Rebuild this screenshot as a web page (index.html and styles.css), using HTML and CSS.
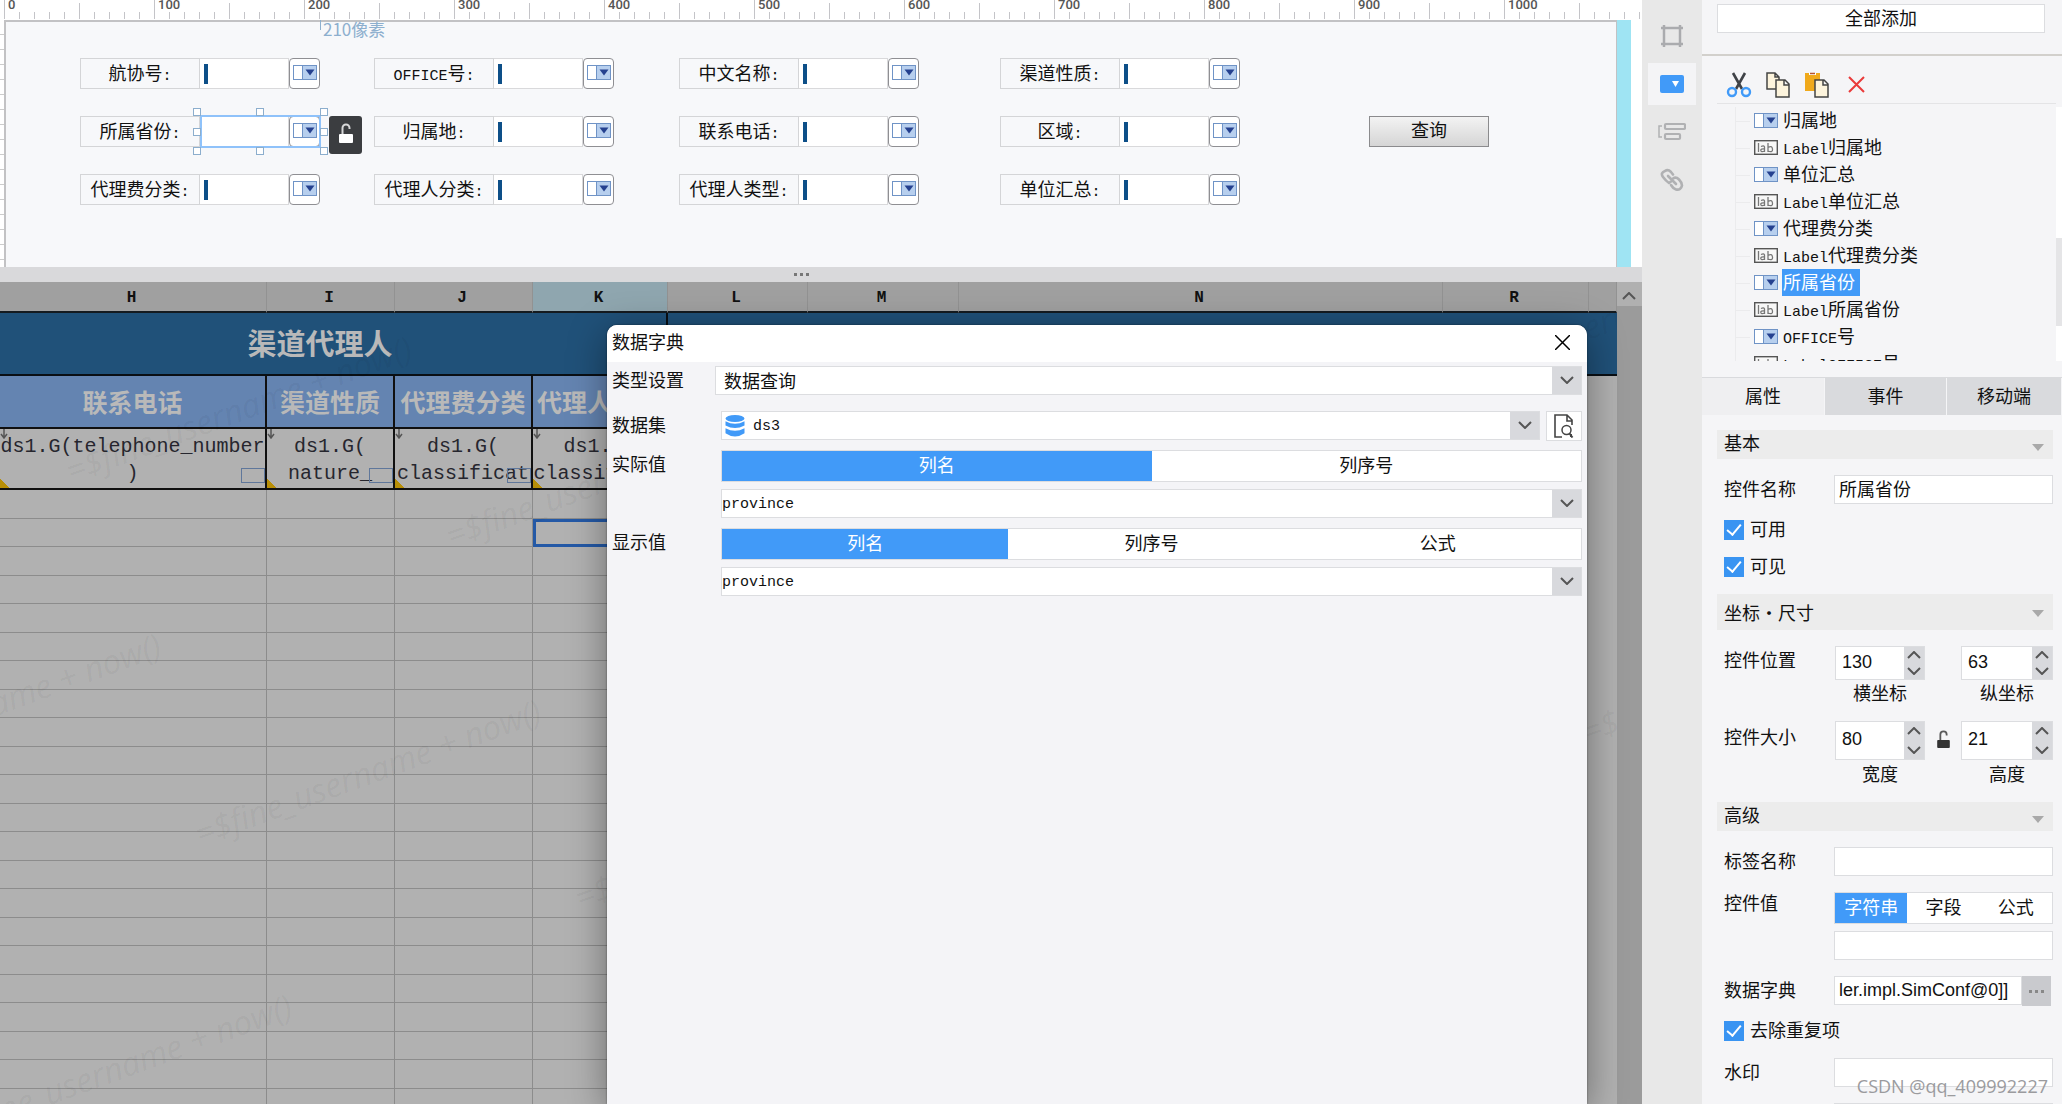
FILE: index.html
```html
<!DOCTYPE html>
<html lang="zh-CN">
<head>
<meta charset="utf-8">
<title>数据字典</title>
<link rel="stylesheet" href="styles.css">
</head>
<body>
<svg class="sprite" aria-hidden="true">
  <symbol id="combo" viewBox="0 0 24 15"><rect x=".5" y=".5" width="23" height="14" fill="#fff" stroke="#6f93c6"/><rect x="10" y="1" width="13" height="13" fill="#b7cfee"/><path d="M9.500 0v15" stroke="#6f93c6"/><path d="M12.500 4.500h9l-4.500 6z" fill="#25418f"/></symbol>
  <symbol id="lab" viewBox="0 0 24 15"><rect x=".7" y=".7" width="22.600" height="13.600" fill="#f7f7f7" stroke="#555" stroke-width="1.400"/><path d="M4.500 3v9M7 6.500q3-1.500 3.500.5v5M10.500 9q-4-.5-3.700 1.500t3.700.5M14 3v9M14 7.500q4-2.500 4.500 1.500t-4.500 2" fill="none" stroke="#777" stroke-width="1.300"/></symbol>
  <symbol id="down" viewBox="0 0 14 8"><path d="M1 1l6 6 6-6" fill="none" stroke="#555" stroke-width="2"/></symbol>
  <symbol id="up" viewBox="0 0 14 8"><path d="M1 7l6-6 6 6" fill="none" stroke="#555" stroke-width="2"/></symbol>
  <symbol id="lock" viewBox="0 0 14 20"><rect x="0" y="11" width="14" height="9" rx="1" fill="currentColor"/><path d="M3.500 11V5a3.500 3.500 0 0 1 7 0v1" fill="none" stroke="currentColor" stroke-width="2" opacity=".8"/></symbol>
  <symbol id="cell-arrow" viewBox="0 0 8 10"><path d="M4 0v8M1 5l3 4 3-4" fill="none" stroke="#555" stroke-width="1.500"/></symbol>
</svg>
<div class="app">
  <main class="main">
    <section class="designer">
      <div class="ruler"><span>0</span><span>100</span><span>200</span><span>300</span><span>400</span><span>500</span><span>600</span><span>700</span><span>800</span><span>900</span><span>1000</span></div>
      <div class="stage">
        <div class="vruler"></div>
        <form class="canvas">
          <div class="width-hint">210像素</div>
          <div class="field"><label for="f1">航协号<i>:</i></label><input id="f1"><button type="button" aria-label="展开"><svg><use href="#combo"/></svg></button></div>
          <div class="field"><label for="f2"><i>OFFICE</i>号<i>:</i></label><input id="f2"><button type="button" aria-label="展开"><svg><use href="#combo"/></svg></button></div>
          <div class="field"><label for="f3">中文名称<i>:</i></label><input id="f3"><button type="button" aria-label="展开"><svg><use href="#combo"/></svg></button></div>
          <div class="field"><label for="f4">渠道性质<i>:</i></label><input id="f4"><button type="button" aria-label="展开"><svg><use href="#combo"/></svg></button></div>
          <div></div>
          <div class="field chosen"><label for="f5">所属省份<i>:</i></label><input id="f5"><button type="button" aria-label="展开"><svg><use href="#combo"/></svg></button>
            <div class="selection"><b class="n w"></b><b class="n c"></b><b class="n e"></b><b class="m w"></b><b class="m e"></b><b class="s w"></b><b class="s c"></b><b class="s e"></b></div>
            <div class="lock-tip"><svg><use href="#lock"/></svg></div>
          </div>
          <div class="field"><label for="f6">归属地<i>:</i></label><input id="f6"><button type="button" aria-label="展开"><svg><use href="#combo"/></svg></button></div>
          <div class="field"><label for="f7">联系电话<i>:</i></label><input id="f7"><button type="button" aria-label="展开"><svg><use href="#combo"/></svg></button></div>
          <div class="field"><label for="f8">区域<i>:</i></label><input id="f8"><button type="button" aria-label="展开"><svg><use href="#combo"/></svg></button></div>
          <button type="button" class="query">查询</button>
          <div class="field"><label for="f9">代理费分类<i>:</i></label><input id="f9"><button type="button" aria-label="展开"><svg><use href="#combo"/></svg></button></div>
          <div class="field"><label for="f10">代理人分类<i>:</i></label><input id="f10"><button type="button" aria-label="展开"><svg><use href="#combo"/></svg></button></div>
          <div class="field"><label for="f11">代理人类型<i>:</i></label><input id="f11"><button type="button" aria-label="展开"><svg><use href="#combo"/></svg></button></div>
          <div class="field"><label for="f12">单位汇总<i>:</i></label><input id="f12"><button type="button" aria-label="展开"><svg><use href="#combo"/></svg></button></div>
        </form>
        <div class="edge"></div>
      </div>
    </section>
    <div class="splitter"><i></i><i></i><i></i></div>
    <section class="sheet">
      <div class="grid-wrap">
        <table class="grid">
          <colgroup><col class="ch"><col class="ci"><col class="cj"><col class="ck"><col class="cl"><col class="cm"><col class="cn"><col class="cr"><col></colgroup>
          <thead><tr><th>H</th><th>I</th><th>J</th><th class="on">K</th><th>L</th><th>M</th><th>N</th><th>R</th><th></th></tr></thead>
          <tbody id="rows">
            <tr class="title"><td colspan="4">渠道代理人</td><td colspan="5"></td></tr>
            <tr class="heads"><td>联系电话</td><td>渠道性质</td><td>代理费分类</td><td>代理人类型</td><td colspan="5" class="blank"></td></tr>
            <tr class="data">
              <td><div><svg class="arr"><use href="#cell-arrow"/></svg>ds1.G(telephone_number<br>)<s></s></div></td>
              <td><div><svg class="arr"><use href="#cell-arrow"/></svg>ds1.G(<br>nature_<s></s></div></td>
              <td><div><svg class="arr"><use href="#cell-arrow"/></svg>ds1.G(<br>classificat<s></s></div></td>
              <td><div><svg class="arr"><use href="#cell-arrow"/></svg>ds1.G(<br>classificat<s></s></div></td>
              <td colspan="5" class="blank"></td>
            </tr>
          </tbody>
        </table>
        <div class="marks" aria-hidden="true">
          <span style="left:72px;top:482px">=$fine_username + now()</span>
          <span style="left:452px;top:547px">=$fine_username + now()</span>
          <span style="left:-179px;top:779px">=$fine_username + now()</span>
          <span style="left:201px;top:845px">=$fine_username + now()</span>
          <span style="left:581px;top:909px">=$fine_username + now()</span>
          <span style="left:-48px;top:1140px">=$fine_username + now()</span>
          <span style="left:1460px;top:386px">=$fine_username + now()</span>
          <span style="left:1588px;top:743px">=$fine_username + now()</span>
        </div>
      </div>
      <div class="vscroll"><svg><use href="#up"/></svg></div>
    </section>
    <div class="dialog" role="dialog" aria-labelledby="dlg-title">
      <header><h2 id="dlg-title">数据字典</h2><button type="button" aria-label="关闭"><svg viewBox="0 0 15 15"><path d="M0 0l15 15M15 0L0 15" stroke="#000" stroke-width="1.500"/></svg></button></header>
      <div class="dlg-body">
        <div class="drow wide"><label for="d1">类型设置</label><div class="combo"><select id="d1"><option>数据查询</option></select><svg><use href="#down"/></svg></div></div>
        <div class="drow dataset"><label for="d2">数据集</label>
          <div class="combo"><svg class="db" viewBox="0 0 20 22"><g fill="#419af8"><ellipse cx="10" cy="3.500" rx="9.500" ry="3.500"/><path d="M.5 6.300q9.500 5 19 0v4.200q-9.500 5-19 0z"/><path d="M.5 13.300q9.500 5 19 0v5q-9.500 6.500-19 0z"/></g></svg><select id="d2" class="code"><option>ds3</option></select><svg><use href="#down"/></svg></div>
          <button type="button" class="preview" aria-label="预览"><svg viewBox="0 0 20 24"><path d="M8 23H1V1h12l5 5v5M13 1v6h5" fill="none" stroke="#444" stroke-width="1.600"/><circle cx="12.500" cy="16" r="4.500" fill="none" stroke="#444" stroke-width="1.500"/><path d="M15.500 19.500l3 4M17 20v3" stroke="#444" stroke-width="2"/></svg></button></div>
        <div class="drow tall"><span>实际值</span><div class="seg"><button type="button" class="on">列名</button><button type="button">列序号</button></div></div>
        <div class="drow"><span></span><div class="combo"><select class="code" aria-label="实际值列名"><option>province</option></select><svg><use href="#down"/></svg></div></div>
        <div class="drow tall"><span>显示值</span><div class="seg"><button type="button" class="on">列名</button><button type="button">列序号</button><button type="button">公式</button></div></div>
        <div class="drow"><span></span><div class="combo"><select class="code" aria-label="显示值列名"><option>province</option></select><svg><use href="#down"/></svg></div></div>
      </div>
    </div>
  </main>
  <nav class="tools">
    <button type="button" aria-label="单元格"><svg width="24" height="24" viewBox="0 0 24 24"><path d="M4 1v22M20 1v22M1 4h22M1 20h22" stroke="#aaabae" stroke-width="2.500"/></svg></button>
    <button type="button" class="on" aria-label="控件设置"><svg width="24" height="18" viewBox="0 0 24 18"><rect width="24" height="18" rx="2" fill="#419af8"/><path d="M12 6h7l-3.500 6z" fill="#fff"/></svg></button>
    <button type="button" aria-label="条件属性"><svg width="28" height="20" viewBox="0 0 28 20"><g fill="none" stroke="#b0b1b3"><path d="M4 4H1v11h3" stroke-width="1.500"/><rect x="7" y="2" width="20" height="5" rx="1" stroke-width="2.200"/><rect x="7" y="12" width="15" height="5" rx="1" stroke-width="2.200"/></g></svg></button>
    <button type="button" aria-label="超级链接"><svg width="24" height="24" viewBox="0 0 24 24"><g fill="none" stroke="#b0b1b3" stroke-width="2.600" stroke-linecap="round"><path d="M11 13.500L9 15Q6 13 3 9T5 3q3-2 6 1l2 2.500"/><path d="M8 8l8 8M13 10.500q3-2 6 1t3 6q-1 5-6 4-3-1-5-4.500"/></g></svg></button>
  </nav>
  <aside class="side">
    <div class="addall"><button type="button">全部添加</button></div>
    <div class="widgets">
      <div class="bar">
        <button type="button" aria-label="剪切"><svg width="26" height="26" viewBox="0 0 26 26"><path d="M7 1l9 16M19 1l-9 16" stroke="#3f4247" stroke-width="2.600"/><g fill="none" stroke="#419af8" stroke-width="2.400"><circle cx="6" cy="20" r="4"/><circle cx="20" cy="20" r="4"/></g></svg></button>
        <button type="button" aria-label="复制"><svg width="26" height="26" viewBox="0 0 26 26"><g fill="#fdf4dd" stroke="#444" stroke-width="1.500"><path d="M2 1h8l4 4v12H2zM10 1v4h4"/><path d="M11 8h9l4 4v13H11zM19 8v5h5"/></g></svg></button>
        <button type="button" aria-label="粘贴"><svg width="26" height="26" viewBox="0 0 26 26"><path d="M1 1h15v18H1z" fill="#f0a91b"/><path d="M5 1h7v2H5z" fill="#fff"/><path d="M6 1.500h5" stroke="#b5532d" stroke-width="1.500"/><path d="M11 8h9l4 4v13H11zM19 8v5h5" fill="#fdf4dd" stroke="#444" stroke-width="1.500"/></svg></button>
        <button type="button" aria-label="删除"><svg width="26" height="26" viewBox="0 0 26 26"><path d="M6 5l15 15M21 5L6 20" stroke="#ea3a3a" stroke-width="2"/></svg></button>
      </div>
      <div class="tree-wrap">
        <ul class="tree">
          <li><svg><use href="#combo"/></svg><span>归属地</span></li>
          <li><svg><use href="#lab"/></svg><span><i>Label</i>归属地</span></li>
          <li><svg><use href="#combo"/></svg><span>单位汇总</span></li>
          <li><svg><use href="#lab"/></svg><span><i>Label</i>单位汇总</span></li>
          <li><svg><use href="#combo"/></svg><span>代理费分类</span></li>
          <li><svg><use href="#lab"/></svg><span><i>Label</i>代理费分类</span></li>
          <li class="on"><svg><use href="#combo"/></svg><span>所属省份</span></li>
          <li><svg><use href="#lab"/></svg><span><i>Label</i>所属省份</span></li>
          <li><svg><use href="#combo"/></svg><span><i>OFFICE</i>号</span></li>
          <li><svg><use href="#lab"/></svg><span><i>LabelOFFICE</i>号</span></li>
        </ul>
        <div class="tree-scroll"></div>
      </div>
    </div>
    <div class="tabs"><button type="button" class="on">属性</button><button type="button">事件</button><button type="button">移动端</button></div>
    <form class="props">
      <h3>基本</h3>
      <div class="prow"><label for="p1">控件名称</label><input id="p1" class="box" value="所属省份"></div>
      <label class="check"><input type="checkbox" checked>可用</label>
      <label class="check"><input type="checkbox" checked>可见</label>
      <h3 class="high">坐标・尺寸</h3>
      <div class="prow spin">
        <span>控件位置</span>
        <div class="num"><input type="number" id="px" value="130"><div class="steps"><svg><use href="#up"/></svg><svg><use href="#down"/></svg></div></div>
        <span></span>
        <div class="num"><input type="number" id="py" value="63"><div class="steps"><svg><use href="#up"/></svg><svg><use href="#down"/></svg></div></div>
      </div>
      <div class="prow spin caps"><span></span><label for="px">横坐标</label><span></span><label for="py">纵坐标</label></div>
      <div class="prow spin big">
        <span>控件大小</span>
        <div class="num"><input type="number" id="pw" value="80"><div class="steps"><svg><use href="#up"/></svg><svg><use href="#down"/></svg></div></div>
        <svg class="ratio"><use href="#lock"/></svg>
        <div class="num"><input type="number" id="ph" value="21"><div class="steps"><svg><use href="#up"/></svg><svg><use href="#down"/></svg></div></div>
      </div>
      <div class="prow spin caps"><span></span><label for="pw">宽度</label><span></span><label for="ph">高度</label></div>
      <h3>高级</h3>
      <div class="prow"><label for="p2">标签名称</label><input id="p2" class="box"></div>
      <div class="prow value"><label for="p3">控件值</label><div class="seg"><button type="button" class="on">字符串</button><button type="button">字段</button><button type="button">公式</button></div></div>
      <div class="prow"><span></span><input id="p3" class="box"></div>
      <div class="prow"><label for="p4">数据字典</label><div class="dict"><input id="p4" class="box" value="ler.impl.SimConf@0]]"><button type="button" aria-label="编辑"><i></i><i></i><i></i></button></div></div>
      <label class="check"><input type="checkbox" checked>去除重复项</label>
      <div class="prow"><label for="p5">水印</label><input id="p5" class="box"></div>
      <div class="prow"><span></span><input class="box" aria-label="字号"></div>
    </form>
    <div class="credit">CSDN @qq_409992227</div>
  </aside>
</div>
<script src="script.js"></script>
</body>
</html>
```
FILE: styles.css
```css
* { box-sizing: border-box; }
body { margin: 0; overflow: hidden; font: 18px/24px "Liberation Sans", "Noto Sans CJK SC", sans-serif; color: #111; background: #f5f5f7; }
button, input, select { font: inherit; color: inherit; margin: 0; padding: 0; border: 0; border-radius: 0; background: none; outline: none; }
select { appearance: none; }
svg { display: block; flex: none; }
h2, h3, ul { margin: 0; padding: 0; font-size: 18px; font-weight: 400; }
i { font: normal 15px/18px "Liberation Mono", monospace; }
.sprite { position: absolute; width: 0; height: 0; }
.app { display: grid; grid-template-columns: minmax(0, 1fr) 60px 360px; height: 100vh; }
.main { position: relative; display: flex; flex-direction: column; min-width: 0; min-height: 0; }

/* Form designer */
.designer { height: 267px; flex: none; background: #fff; }
.ruler { display: flex; height: 20px; padding-left: 5px; color: #555; font: 500 13px/10px Roboto, sans-serif;
  background:
    repeating-linear-gradient(90deg, #c4c4c8 0 1px, transparent 1px 150px) 4px 0 / 100% 19px no-repeat,
    repeating-linear-gradient(90deg, #c4c4c8 0 1px, transparent 1px 75px) 4px 3px / 100% 16px no-repeat,
    repeating-linear-gradient(90deg, #c4c4c8 0 1px, transparent 1px 15px) 4px 12px / 100% 7px no-repeat, #fff; }
.ruler span { flex: 0 0 150px; padding-left: 3px; }
.stage { display: flex; height: 247px; }
.vruler { width: 4px; background: repeating-linear-gradient(#fff 0 14px, #ccc 14px 15px); }
.canvas { flex: 1; display: grid; grid-template-columns: 294px 305px 321px 369px 1fr; grid-auto-rows: 31px; row-gap: 27px; position: relative;
  padding: 36px 0 0 74px; background: #f7f8fa; border: 2px solid #c2c2c4; border-width: 2px 1px 0 2px; }
.edge { width: 25px; border-left: 14px solid #9fe4f3; background: #fff; }
.width-hint { position: absolute; left: 314px; top: -2px; padding-left: 3px; color: #8dafce; font: 17px/18px "Noto Sans CJK SC", sans-serif; background: linear-gradient(#8dafce, #8dafce) 0 0 / 1px 10px no-repeat; }
.field { position: relative; display: flex; width: 240px; }
.field label { flex: 0 0 120px; border: 1px solid #d4d5d7; text-align: center; line-height: 30px; }
.field input { flex: 1; min-width: 0; border: 1px solid #d9d9db; border-left: 0; background: linear-gradient(#0d4f88, #0d4f88) 4px center / 4px 20px no-repeat, #fff; }
.field button { width: 31px; border: 1px solid #8f8f93; border-radius: 4px; background: #fff; padding: 0 0 2px 3px; }
.field button svg, .tree svg { width: 24px; height: 15px; }
.field.chosen input { background: #fff; }
.selection { position: absolute; inset: -1px -1px -1px 120px; border: 2px solid #8fc2fa; }
.selection b { position: absolute; width: 8px; height: 8px; background: #fff; border: 1px solid #8caecd; }
.n { top: -9px; } .m { top: 11px; } .s { bottom: -9px; }
.w { left: -9px; } .c { left: 54px; } .e { right: -9px; }
.lock-tip { position: absolute; left: 249px; top: 0; display: grid; place-items: center; width: 33px; height: 38px; padding-bottom: 4px; border-radius: 3px; background: #3b3d40; color: #fff; }
.lock-tip svg { width: 14px; height: 20px; }
.query { width: 120px; padding-bottom: 2px; border: 1px solid #8b8b8d; background: linear-gradient(#f3f3f3, #d5d5d5); }
.splitter { flex: 0 0 15px; display: flex; gap: 3px; align-items: center; justify-content: center; padding-right: 40px; background: #d9d9db; }
.splitter i { width: 3px; height: 3px; background: #777; }

/* Dimmed worksheet */
.sheet { flex: 1; display: flex; min-height: 0; background: #b1b1b1; }
.grid-wrap { flex: 1; position: relative; overflow: hidden; }
.grid { width: 100%; table-layout: fixed; border-collapse: separate; border-spacing: 0; text-align: center; }
.ch { width: 267px; } .ci { width: 128px; } .cj { width: 138px; } .ck { width: 135px; } .cl { width: 140px; } .cm { width: 151px; } .cn { width: 484px; } .cr { width: 146px; }
.grid th, .grid td { padding: 0; overflow: hidden; white-space: nowrap; }
.grid th { height: 31px; padding: 3px 3px 0 0; background: #a0a0a0; border-right: 1px solid #929292; border-bottom: 2px solid #151b20; font: 700 16px/26px "Liberation Mono", monospace; }
.grid th.on { background: #8fa6af; }
.grid .title td { height: 63px; padding-top: 3px; background: #205179; border-bottom: 2px solid #0a0f14; color: #b9b9b9; font-size: 29px; font-weight: 700; }
.grid .title td:first-child { padding-right: 26px; border-right: 2px solid #0a0f14; }
.grid .heads td { height: 53px; padding-top: 2px; background: #6484b1; border: solid #101010; border-width: 0 2px 2px 0; color: #b9b9b9; font-size: 25px; font-weight: 700; }
.grid .data td { height: 61px; border: solid #101010; border-width: 0 2px 2px 0; }
.grid tr .blank.blank { background: none; border-width: 0; }
.data div { position: relative; height: 59px; padding-top: 4px; overflow: hidden; color: #26262e; font: 20px/27px "Liberation Mono", monospace; background: linear-gradient(45deg, #b88f08 0 7px, transparent 7px) 0 100% / 10px 10px no-repeat; }
.data s { position: absolute; right: 0; bottom: 5px; width: 24px; height: 15px; border: 1px solid #5f779b; }
.arr { position: absolute; left: 0; top: 0; width: 8px; height: 10px; }
.empty td { height: 28px; border: solid #8c8c8c; border-width: 0 1px 1px 0; }
.empty:nth-child(even) td { height: 29px; }
.empty td:nth-child(n+8) { border-color: transparent; }
.empty .cursor { border: 3px solid #2459a6; }
.marks { position: absolute; inset: -282px 0 0 0; pointer-events: none; }
.marks span { position: absolute; white-space: nowrap; font: italic 33px/30px "Open Sans", sans-serif; color: rgba(0, 0, 0, .05); transform: translateY(-26px) rotate(-20deg); transform-origin: 0 100%; }
.vscroll { width: 25px; background: linear-gradient(#b0b0b0 0 24px, #9b9b9b 24px); padding: 10px 5px; }
.vscroll svg { width: 14px; height: 8px; }

/* Dialog */
.dialog { position: absolute; left: 607px; right: 55px; top: 325px; bottom: 0; border-radius: 10px 10px 0 0; background: #f4f4f7; box-shadow: 0 8px 38px rgba(0, 0, 0, .4), 0 0 2px rgba(0, 0, 0, .5); }
.dialog header { display: flex; justify-content: space-between; align-items: center; height: 37px; padding: 0 17px 2px 5px; border-radius: 10px 10px 0 0; background: #fff; }
.dialog header svg { width: 15px; height: 15px; }
.dlg-body { padding: 4px 5px 0; }
.drow { display: grid; grid-template-columns: 109px 1fr; height: 29px; margin-bottom: 10px; line-height: 30px; }
.drow.wide { grid-template-columns: 103px 1fr; margin-bottom: 16px; }
.drow.dataset { grid-template-columns: 109px 1fr 36px; }
.dataset .combo { margin-right: 6px; }
.drow.tall { height: 32px; margin-bottom: 7px; }
.combo { display: flex; align-items: center; height: 29px; border: 1px solid #dcdde0; background: #fff; }
.combo select { flex: 1; min-width: 0; height: 27px; padding-left: 8px; }
.combo select.code { padding: 2px 0 0; font: 15px/25px "Liberation Mono", monospace; }
.combo svg { width: 29px; height: 27px; padding: 9px 7px 10px 8px; background: #d8d9dd; }
.combo .db { width: 20px; height: 22px; margin: 0 8px 0 3px; padding: 0; background: none; }
.preview { display: grid; place-items: center; border: 1px solid #dcdde0; background: #fff; }
.preview svg { width: 20px; height: 24px; }
.seg { display: flex; height: 32px; border: 1px solid #dcdde0; background: #fff; }
.seg button { flex: 1; }
.seg .on { background: #419af8; color: #fff; }

/* Tool strip */
.tools { display: flex; flex-direction: column; align-items: center; gap: 6px; padding: 15px 0 0; background: #e8e8e8; }
.tools button { display: grid; place-items: center; width: 48px; height: 42px; }
.tools .on { background: #f4f4f6; }

/* Side panel */
.side { position: relative; overflow: hidden; height: 100vh; }
.addall { height: 56px; padding: 4px 17px 0 15px; border-bottom: 2px solid #d2d0cc; }
.addall button { width: 100%; height: 29px; border: 1px solid #dcdde0; background: #fff; }
.widgets { padding-left: 15px; }
.bar { display: flex; gap: 13px; height: 48px; margin-right: 6px; padding: 16px 0 0 9px; border-bottom: 1px solid #e4e4e6; }
.bar button { height: 26px; }
.tree-wrap { display: flex; height: 254px; margin-top: 3px; overflow: hidden; }
.tree { flex: 1; list-style: none; margin-left: 18px; border-left: 1px solid #ebebed; }
.tree li { display: flex; align-items: center; gap: 4px; height: 27px; padding-left: 18px; background: linear-gradient(#ebebed, #ebebed) 0 14px / 14px 1px no-repeat; }
.tree span { padding: 1px 5px 0 1px; line-height: 26px; }
.tree .on span { background: #419af8; color: #fff; }
.tree-scroll { width: 6px; background: linear-gradient(#e5e5e7, #e5e5e7) 0 131px / 6px 88px no-repeat, #fff; }
.tabs { display: grid; grid-template-columns: 123px 122px 1fr; height: 38px; margin-top: 16px; border-top: 1px solid #d9dadd; }
.tabs button { background: #d9dadd; border-right: 1px solid #f5f5f7; }
.tabs .on { background: #efeff1; }
.props { padding: 15px 9px 0 15px; }
.props h3 { display: flex; align-items: center; justify-content: space-between; height: 29px; margin-bottom: 16px; padding: 0 9px 2px 7px; background: #ececec; }
.props h3::after { content: ""; margin-top: 8px; border: 6px solid transparent; border-top: 7px solid #a9a9a9; border-bottom: 0; }
.props h3.high { height: 36px; margin-top: 16px; padding: 3px 9px 0 7px; }
.props h3.high::after { margin-top: 0; }
.prow { display: grid; grid-template-columns: 110px 1fr; height: 29px; margin: 0 0 16px 7px; line-height: 30px; }
.box { width: 100%; height: 29px; padding-left: 4px; border: 1px solid #dcdde0; background: #fff; }
.check { display: flex; align-items: center; gap: 6px; height: 20px; margin: 0 0 17px 7px; }
.check input { appearance: none; width: 20px; height: 20px; background: #3994f2; display: grid; place-items: center; }
.check input::after { content: ""; width: 6px; height: 12px; margin-top: -4px; border: solid #fff; border-width: 0 2px 2px 0; transform: rotate(40deg); }
.prow.spin { grid-template-columns: 111px 90px 36px minmax(0, 1fr); margin-bottom: 4px; }
.prow.big { height: 35px; line-height: 35px; margin-bottom: 4px; }
.prow.caps { height: 30px; margin-bottom: 12px; text-align: center; }
.num { display: flex; min-width: 0; border: 1px solid #dcdde0; background: #fff; }
.num input { flex: 1; width: 0; min-width: 0; padding: 0 0 2px 6px; appearance: textfield; }
.num input::-webkit-inner-spin-button { appearance: none; }
.steps { display: flex; flex-direction: column; justify-content: space-around; align-items: center; width: 20px; background: #d8d9dd; }
.steps svg { width: 14px; height: 8px; }
.ratio { width: 13px; height: 18px; margin: 9px 12px; color: #333; }
.prow.value { height: 32px; line-height: 24px; margin-bottom: 7px; }
.dict { display: flex; padding-right: 2px; }
.dict .box { flex: 1; min-width: 0; padding-bottom: 2px; }
.dict button { display: flex; align-items: center; justify-content: center; gap: 3px; width: 29px; background: #c9cace; }
.dict button i { width: 3px; height: 3px; background: #888; }
.credit { position: absolute; right: 14px; bottom: 6px; font: 18px/24px "Open Sans", sans-serif; color: #9b9b9e; }
```
FILE: script.js
```js
// Fill the worksheet below the data row with empty cells; K in the second row holds the cell cursor.
const body = document.getElementById("rows");
for (let r = 0; r < 24; r++) {
  const tr = body.insertRow();
  tr.className = "empty";
  for (let c = 0; c < 9; c++) {
    const td = tr.insertCell();
    if (r === 1 && c === 3) td.className = "cursor";
  }
}
```
